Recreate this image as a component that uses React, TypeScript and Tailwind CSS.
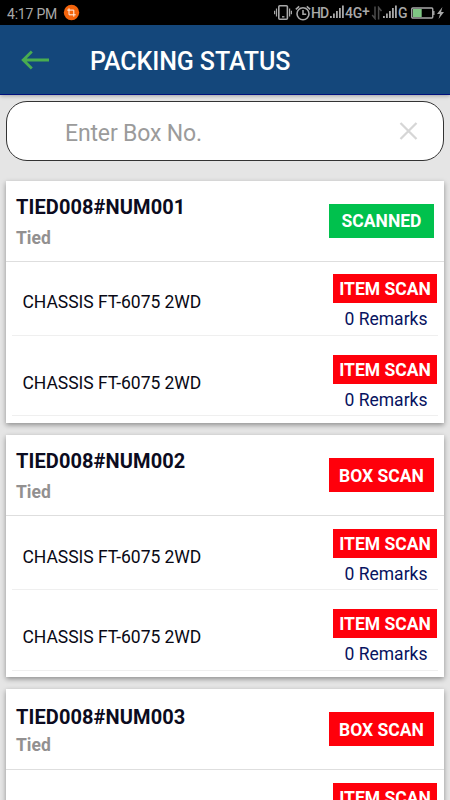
import { clsx } from "clsx";

type Box = {
  number: string;
  status: string;
  scanned: boolean;
  tight?: boolean;
  items: string[];
};

const BOXES: Box[] = [
  { number: "TIED008#NUM001", status: "Tied", scanned: true, items: ["CHASSIS FT-6075 2WD", "CHASSIS FT-6075 2WD"] },
  { number: "TIED008#NUM002", status: "Tied", scanned: false, items: ["CHASSIS FT-6075 2WD", "CHASSIS FT-6075 2WD"] },
  { number: "TIED008#NUM003", status: "Tied", scanned: false, tight: true, items: ["CHASSIS FT-6075 2WD"] },
];

function SignalBars() {
  return (
    <svg className="-mt-[2px]" width="14" height="13" viewBox="0 0 14 13" fill="#a8a8a8">
      <rect x="0" y="11" width="1.8" height="2" />
      <rect x="3" y="8.5" width="1.8" height="4.5" />
      <rect x="6" y="6" width="1.8" height="7" />
      <rect x="9" y="3" width="1.8" height="10" />
      <rect x="12" y="0.5" width="1.8" height="12.5" />
    </svg>
  );
}

function StatusBar() {
  return (
    <div className="flex h-[25px] items-center bg-black pl-[7px] pr-[6px] leading-none text-[#a8a8a8]">
      <span className="w-[51px] whitespace-nowrap pt-[2px] text-[14px] tracking-[-0.2px]">4:17 PM</span>
      <svg className="ml-[5px]" width="17" height="17" viewBox="0 0 17 17" fill="none">
        <circle cx="8.5" cy="8.5" r="7.7" fill="#f4640c" />
        <path d="M6 4.3v6.5h6.7M4.2 6.1h6.6v6.6" stroke="#fff0e6" strokeWidth="1" />
      </svg>
      <div className="ml-auto flex items-center">
        <svg width="18" height="17" viewBox="0 0 18 17" fill="none" stroke="#a8a8a8">
          <rect x="4.8" y="1.7" width="8.6" height="13.6" rx="1" strokeWidth="1.6" />
          <path d="M8 12.8h2.4" strokeWidth="1.4" />
          <path d="M2.5 4.5v8M.6 6.8v3.4M15.6 4.5v8M17.4 6.8v3.4" strokeWidth="1.2" />
        </svg>
        <svg className="ml-[3px]" width="16" height="16" viewBox="0 0 16 16" fill="none" stroke="#a8a8a8" strokeWidth="1.6">
          <circle cx="8" cy="8.7" r="6" />
          <path d="M8 5v4.2h3.2M.8 4.3l3.4-3M15.2 4.3l-3.4-3" />
        </svg>
        <span className="w-[19px] text-[14px] font-medium tracking-[-0.9px]">HD</span>
        <SignalBars />
        <span className="ml-px flex w-[26px] text-[14px] font-medium tracking-[-0.2px]">
          4G<span className="-mt-[2px]">+</span>
        </span>
        <svg width="12" height="14" viewBox="0 0 12 14" fill="none" stroke="#4b4b4b" strokeWidth="1.5">
          <path d="M4 .5v12L1.2 9M7.6 13.5v-12L10.5 5" />
        </svg>
        <SignalBars />
        <span className="ml-px w-[13px] text-[14px] font-medium">G</span>
        <svg width="24" height="12" viewBox="0 0 24 12">
          <rect x="0.75" y="1" width="21" height="10" rx="1" fill="none" stroke="#a8a8a8" strokeWidth="1.4" />
          <rect x="2" y="2" width="8.7" height="8" fill="#7fc884" />
          <path d="M22.8 4v4" stroke="#a8a8a8" strokeWidth="1.4" />
        </svg>
        <svg className="ml-[2px]" width="7" height="12" viewBox="0 0 7 12" fill="#a8a8a8">
          <path d="M5.4 0 0 7h3L1.6 12 7 4.9H4.1z" />
        </svg>
      </div>
    </div>
  );
}

function AppHeader() {
  return (
    <header className="flex h-[70px] items-center border-b border-[#00107c] bg-[#14477b] pl-[21px] shadow-[0_1px_4px_rgba(0,0,0,0.3)]">
      <button aria-label="Back" className="w-[69px]">
        <svg width="29" height="20" viewBox="0 0 29 20" fill="none" stroke="#49ad50" strokeWidth="2.8">
          <path d="M28 10H2M10.8 1.6 2.2 10l8.6 8.4" />
        </svg>
      </button>
      <h1 className="whitespace-nowrap pt-[4px] text-[25px] font-medium tracking-[-0.1px] text-white">PACKING STATUS</h1>
    </header>
  );
}

function SearchBox() {
  return (
    <div className="mx-[6px] mt-[6px] flex h-[60px] items-center justify-between rounded-[21px] border border-[#333] bg-white pl-[58px] pr-[25px]">
      <span className="pt-[6px] text-[23px] tracking-[-0.15px] text-[#9b9b9b]">Enter Box No.</span>
      <svg width="19" height="18" viewBox="0 0 19 18" fill="none" stroke="#d6d6d6" strokeWidth="2.3">
        <path d="m1.5 1 16 16M17.5 1l-16 16" />
      </svg>
    </div>
  );
}

function ItemRow({ name }: { name: string }) {
  return (
    <div className="mx-[6px] flex h-[80.5px] justify-between border-b border-[#efefef]">
      <span className="pl-[10.5px] pt-[37px] text-[17.5px] leading-[20px] tracking-[-0.03px] text-[#090915]">{name}</span>
      <div className="mr-px flex w-[104px] flex-col items-center">
        <button className="mt-[19px] h-[29px] w-[104px] whitespace-nowrap bg-[#ff000b] text-[17.5px] font-bold leading-[30px] text-white">
          ITEM SCAN
        </button>
        <span className="mt-[6px] whitespace-nowrap pl-[2px] text-[17.5px] leading-[20px] text-[#07135f]">0 Remarks</span>
      </div>
    </div>
  );
}

function BoxCard({ box }: { box: Box }) {
  return (
    <section className="h-[242px] bg-white shadow-[0_2px_5px_rgba(0,0,0,0.38)]">
      <div className="flex h-[81px] items-center justify-between border-b border-[#dedede] px-[10px]">
        <div className={box.tight ? "pt-[2px]" : "pt-px"}>
          <h2 className="text-[20px] font-bold leading-[24px] tracking-[0.1px] text-[#0b0b20]">{box.number}</h2>
          <p
            className={clsx(
              "text-[17.5px] font-bold leading-[20px] text-[#929090]",
              box.tight ? "mt-[6px]" : "mt-[9px]"
            )}
          >
            {box.status}
          </p>
        </div>
        <button
          className={clsx(
            "h-[34px] w-[105px] whitespace-nowrap pt-px text-[17.5px] font-bold text-white",
            box.scanned ? "bg-[#00c14d]" : "bg-[#ff000b]"
          )}
        >
          {box.scanned ? "SCANNED" : "BOX SCAN"}
        </button>
      </div>
      <div className="-mt-[6.6px]">
        {box.items.map((item, index) => (
          <ItemRow key={index} name={item} />
        ))}
      </div>
    </section>
  );
}

export default function App() {
  return (
    <div className="h-[800px] w-[450px] overflow-hidden bg-[#e5e5e5] font-['Roboto',sans-serif]">
      <StatusBar />
      <AppHeader />
      <SearchBox />
      <main className="mx-[6px] mt-[20px] flex flex-col gap-[12.2px]">
        {BOXES.map((box) => (
          <BoxCard key={box.number} box={box} />
        ))}
      </main>
    </div>
  );
}
